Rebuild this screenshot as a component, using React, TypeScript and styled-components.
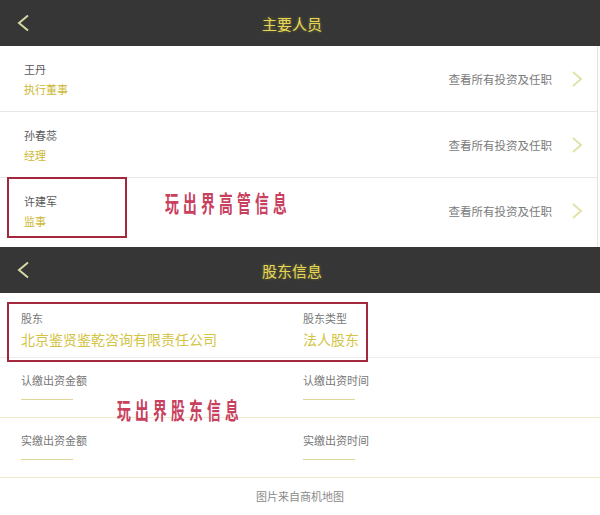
import styled, { createGlobalStyle } from 'styled-components';

const GlobalStyle = createGlobalStyle`
  body {
    margin: 0;
    background: #fff;
    font-family: 'Noto Sans CJK SC', 'Noto Sans', sans-serif;
  }
`;

const people = [
  { name: '王丹', role: '执行董事' },
  { name: '孙春蕊', role: '经理' },
  { name: '许建军', role: '监事', marked: true },
];

const fundRows = [
  { left: '认缴出资金额', right: '认缴出资时间', watermark: true },
  { left: '实缴出资金额', right: '实缴出资时间' },
];

function BackIcon() {
  return (
    <StyledBack width='14' height='18' viewBox='0 0 14 18'>
      <polyline points='12,1.5 3,9 12,16.5' fill='none' stroke='#d5d8a4' strokeWidth='2' />
    </StyledBack>
  );
}

function ArrowIcon() {
  return (
    <svg width='12' height='16' viewBox='0 0 12 16'>
      <polyline points='2,1 10,8 2,15' fill='none' stroke='#e1e3a8' strokeWidth='2' />
    </svg>
  );
}

function NavBar({ title }) {
  return (
    <StyledNavBar>
      <BackIcon />
      <StyledNavTitle>{title}</StyledNavTitle>
    </StyledNavBar>
  );
}

export default function App() {
  return (
    <>
      <GlobalStyle />
      <StyledPage>
        <NavBar title='主要人员' />
        <StyledPeopleList>
          {people.map((person) => (
            <StyledPersonRow key={person.name}>
              <StyledPersonInfo>
                <StyledName>{person.name}</StyledName>
                <StyledRole>{person.role}</StyledRole>
              </StyledPersonInfo>
              <StyledMoreLink>
                查看所有投资及任职
                <ArrowIcon />
              </StyledMoreLink>
              {person.marked && (
                <>
                  <StyledMarkBox $left={7} $top={-1} $width={120} $height={61} />
                  <StyledWatermark $left={165} $top={14}>
                    玩出界高管信息
                  </StyledWatermark>
                </>
              )}
            </StyledPersonRow>
          ))}
        </StyledPeopleList>

        <NavBar title='股东信息' />
        <StyledHolderRow>
          <StyledCell>
            <StyledLabel>股东</StyledLabel>
            <StyledValue>北京鉴贤鉴乾咨询有限责任公司</StyledValue>
          </StyledCell>
          <StyledCell>
            <StyledLabel>股东类型</StyledLabel>
            <StyledValue>法人股东</StyledValue>
          </StyledCell>
          <StyledMarkBox $left={7} $top={9} $width={361} $height={60} />
        </StyledHolderRow>

        {fundRows.map((row) => (
          <StyledFundRow key={row.left}>
            <StyledCell>
              <StyledLabel>{row.left}</StyledLabel>
              <StyledBlank />
            </StyledCell>
            <StyledCell>
              <StyledLabel>{row.right}</StyledLabel>
              <StyledBlank />
            </StyledCell>
            {row.watermark && (
              <StyledWatermark $left={117} $top={41}>
                玩出界股东信息
              </StyledWatermark>
            )}
          </StyledFundRow>
        ))}

        <StyledFooter>图片来自商机地图</StyledFooter>
      </StyledPage>
    </>
  );
}

const StyledPage = styled.div`
  width: 600px;
  height: 515px;
  overflow: hidden;
  display: flex;
  flex-direction: column;
`;

const StyledNavBar = styled.div`
  height: 46px;
  flex-shrink: 0;
  background: #363636;
  display: flex;
  align-items: center;
  padding: 0 16px;
`;

const StyledBack = styled.svg`
  flex-shrink: 0;
`;

const StyledNavTitle = styled.h1`
  flex: 1;
  margin: 0 30px 0 0;
  text-align: center;
  font-size: 15px;
  font-weight: 400;
  color: #e4d654;
  text-shadow: 0 0 3px rgba(200, 190, 60, 0.5);
`;

const StyledPeopleList = styled.div`
  width: 597px;
  border-right: 1px solid #e2e2e2;
  padding-bottom: 4px;
`;

const StyledPersonRow = styled.div`
  position: relative;
  height: 65px;
  display: flex;
  align-items: center;
  justify-content: space-between;
  padding: 0 14px 0 24px;
  border-bottom: 1px solid #e6e6e6;

  &:last-child {
    border-bottom: none;
  }
`;

const StyledPersonInfo = styled.div`
  display: flex;
  flex-direction: column;
  gap: 4px;
`;

const StyledName = styled.span`
  font-size: 11px;
  line-height: 16px;
  color: #5a5a5a;
`;

const StyledRole = styled.span`
  font-size: 11px;
  line-height: 16px;
  color: #cdb935;
`;

const StyledMoreLink = styled.div`
  display: flex;
  align-items: center;
  gap: 19px;
  font-size: 11.5px;
  color: #7a7a7a;
`;

const StyledMarkBox = styled.div`
  position: absolute;
  left: ${({ $left }) => $left}px;
  top: ${({ $top }) => $top}px;
  width: ${({ $width }) => $width}px;
  height: ${({ $height }) => $height}px;
  box-sizing: border-box;
  border: 2px solid #a3283d;
  pointer-events: none;
`;

const StyledWatermark = styled.div`
  position: absolute;
  left: ${({ $left }) => $left}px;
  top: ${({ $top }) => $top}px;
  font-family: 'DejaVu Serif', 'Noto Sans CJK SC', serif;
  font-size: 23px;
  line-height: 24px;
  font-weight: 700;
  letter-spacing: 7px;
  color: #c8405e;
  white-space: nowrap;
  transform: scaleX(0.6);
  transform-origin: left center;
`;

const StyledHolderRow = styled.div`
  position: relative;
  height: 65px;
  flex-shrink: 0;
  display: grid;
  grid-template-columns: 282px 1fr;
  padding: 18px 0 0 21px;
  box-sizing: border-box;
  border-bottom: 1px solid #ececec;
`;

const StyledFundRow = styled.div`
  position: relative;
  height: 60px;
  flex-shrink: 0;
  display: grid;
  grid-template-columns: 282px 1fr;
  padding: 15px 0 0 21px;
  box-sizing: border-box;
  border-bottom: 1px solid #f0eacb;
`;

const StyledCell = styled.div`
  display: flex;
  flex-direction: column;
  align-items: flex-start;
`;

const StyledLabel = styled.span`
  font-size: 11px;
  line-height: 14px;
  color: #777;
`;

const StyledValue = styled.span`
  margin-top: 4px;
  font-size: 14px;
  line-height: 20px;
  color: #d3c445;
`;

const StyledBlank = styled.span`
  margin-top: 12px;
  width: 52px;
  height: 1px;
  background: #ddd59a;
`;

const StyledFooter = styled.div`
  height: 36px;
  display: flex;
  align-items: center;
  justify-content: center;
  font-size: 11px;
  color: #8a8a8a;
`;
